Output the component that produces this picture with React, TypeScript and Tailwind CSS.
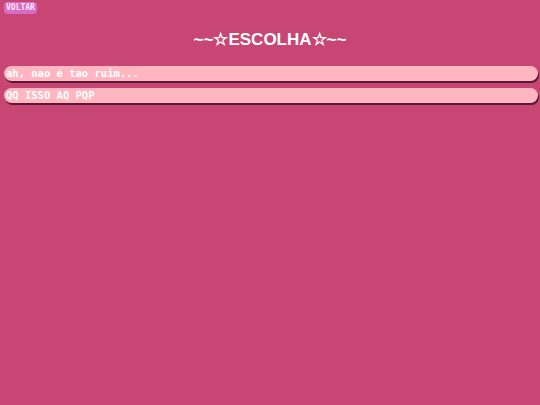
import React from 'react';

const options = ['ah, nao é tao ruim...', 'QQ ISSO AQ PQP'];

export default function App() {
  return (
    <div className="min-h-screen w-full bg-[#c84673] font-['DejaVu_Sans_Mono',monospace]">
      <div className="px-[4px] pt-[2px]">
        <button className="rounded-[4px] bg-[#d86cc4] px-[2px] h-[12px] flex items-center text-[8px] font-bold leading-none text-[#fde8f6]">
          VOLTAR
        </button>
      </div>
      <h1 className="mt-[16px] text-center font-['Liberation_Sans',Arial,sans-serif] text-[17px] font-bold leading-[20px] text-white">
        ~~☆ESCOLHA☆~~
      </h1>
      <div className="mt-[16px] flex flex-col gap-[7px] pl-[4px] pr-[2px]">
        {options.map((o) => (
          <button
            key={o}
            className="flex h-[15px] w-full items-center rounded-full bg-[#ffb6c1] pl-[2px] text-left text-[10.5px] font-bold leading-none text-white shadow-[1px_2px_0_#5a1a35]"
          >
            {o}
          </button>
        ))}
      </div>
    </div>
  );
}
